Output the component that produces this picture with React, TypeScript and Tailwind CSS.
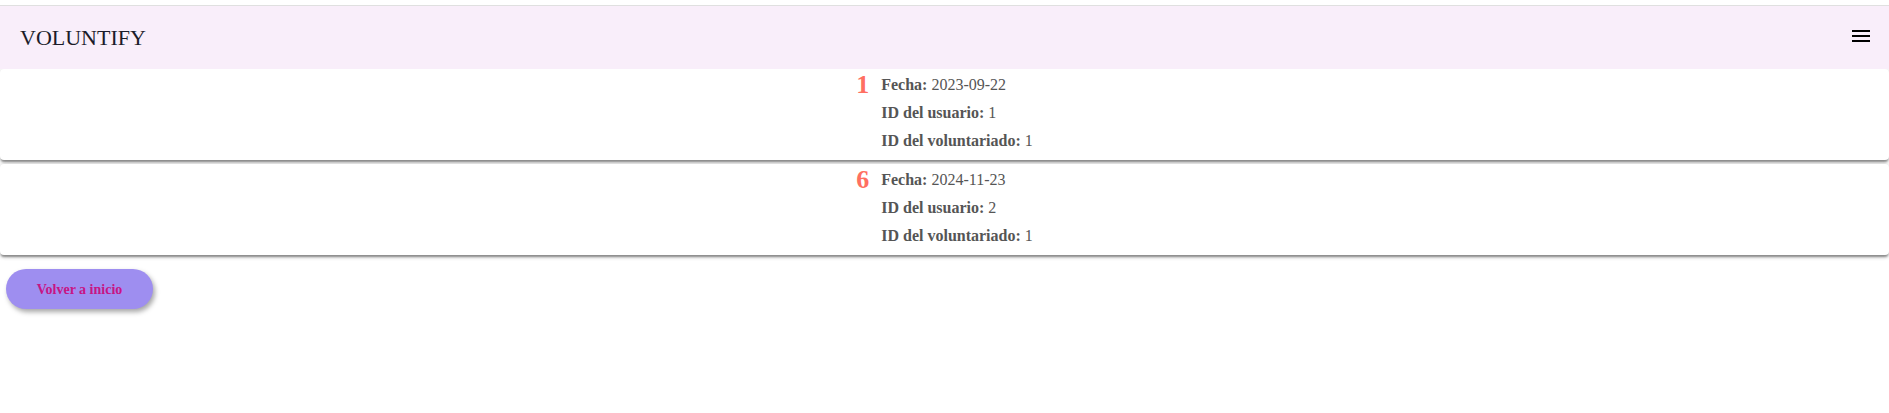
import React from "react"

interface Inscripcion {
  id: number
  fecha: string
  usuario: number
  voluntariado: number
}

const inscripciones: Inscripcion[] = [
  { id: 1, fecha: "2023-09-22", usuario: 1, voluntariado: 1 },
  { id: 6, fecha: "2024-11-23", usuario: 2, voluntariado: 1 },
]

function MenuIcon() {
  return (
    <svg width="24" height="24" viewBox="0 0 24 24" fill="#000">
      <path d="M3 18h18v-2H3v2zm0-5h18v-2H3v2zm0-7v2h18V6H3z" />
    </svg>
  )
}

function Header() {
  return (
    <header className="relative z-10 border-t border-[#e0e0e0] bg-[#f9eefa] h-[64px] flex items-center justify-between pl-[20px] pr-[16px]">
      <span className="text-[22px] text-[#1c1c2a] leading-none">VOLUNTIFY</span>
      <button className="-mt-[4px] flex items-center">
        <MenuIcon />
      </button>
    </header>
  )
}

function InscripcionCard({ item }: { item: Inscripcion }) {
  return (
    <div className="bg-white rounded-[4px] h-[91px] pt-[2px] shadow-[0_3px_2px_-1px_rgba(0,0,0,0.32),0_2px_4px_0_rgba(0,0,0,0.18),0_1px_5px_0_rgba(0,0,0,0.12)]">
      <div className="flex justify-center gap-[12px]">
        <span className="text-[26px] font-bold text-[#ff6f61] leading-[28px]">{item.id}</span>
        <div className="text-[16px] text-[#555] leading-[28px]">
          <p>
            <b>Fecha:</b> {item.fecha}
          </p>
          <p>
            <b>ID del usuario:</b> {item.usuario}
          </p>
          <p>
            <b>ID del voluntariado:</b> {item.voluntariado}
          </p>
        </div>
      </div>
    </div>
  )
}

export default function App() {
  return (
    <div className="min-h-[413px] bg-white pt-[5px] font-['Liberation_Serif','Times_New_Roman',serif]">
      <Header />
      <div className="flex flex-col gap-[4px]">
        {inscripciones.map((item) => (
          <InscripcionCard key={item.id} item={item} />
        ))}
      </div>
      <div className="pl-[6px] pt-[14px]">
        <button className="w-[147px] h-[40px] rounded-full bg-[#9e8ef0] text-[#c71585] text-[14px] font-bold shadow-[2px_3px_5px_rgba(0,0,0,0.35)]">
          Volver a inicio
        </button>
      </div>
    </div>
  )
}
